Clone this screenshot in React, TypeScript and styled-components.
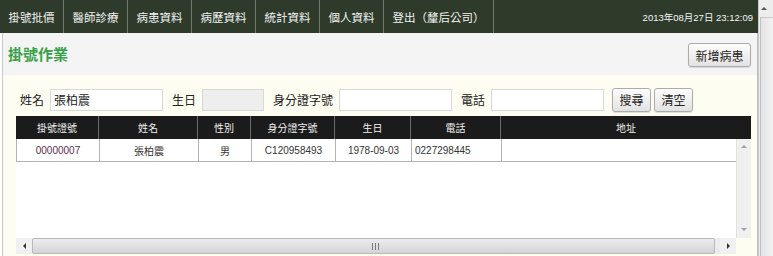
import styled, { createGlobalStyle } from "styled-components";

const GlobalStyle = createGlobalStyle`
  html, body { margin: 0; padding: 0; background: #fff; }
  body { font-family: "Liberation Sans", "Noto Sans CJK TC", sans-serif; overflow: hidden; }
  * { box-sizing: border-box; }
`;

const navItems = ["掛號批價", "醫師診療", "病患資料", "病歷資料", "統計資料", "個人資料", "登出（釐后公司）"];

const columns = [
  { title: "掛號證號", width: 83 },
  { title: "姓名", width: 99 },
  { title: "性別", width: 53 },
  { title: "身分證字號", width: 84 },
  { title: "生日", width: 76 },
  { title: "電話", width: 90 },
  { title: "地址", width: 0 },
];

const rows = [
  { id: "00000007", name: "張柏震", sex: "男", idNo: "C120958493", birth: "1978-09-03", phone: "0227298445", addr: "" },
];

const Page = styled.div`
  display: flex;
  width: 773px;
  height: 256px;
`;

const Main = styled.div`
  width: 758px;
  display: flex;
  flex-direction: column;
`;

const NavBar = styled.div`
  height: 33px;
  background: #2e3b2b;
  display: flex;
  align-items: stretch;
`;

const NavItem = styled.div`
  padding: 0 8.5px;
  display: flex;
  align-items: center;
  color: #f2f2f2;
  font-family: "Noto Sans CJK TC", sans-serif;
  font-size: 11.5px;
  border-right: 1px solid #6f7a6c;
  white-space: nowrap;
`;

const NavDate = styled.div`
  margin-left: auto;
  padding-right: 5px;
  display: flex;
  align-items: center;
  color: #f4f4f4;
  font-size: 9.5px;
  font-family: "Liberation Sans", "Noto Sans CJK TC", sans-serif;
`;

const Content = styled.div`
  flex: 1;
  margin-left: 2px;
  border-left: 1px solid #c9c9c9;
  border-right: 1px solid #bdbdbd;
  display: flex;
  flex-direction: column;
`;

const TitleBar = styled.div`
  height: 42px;
  background: #f4f4f4;
  display: flex;
  align-items: center;
  padding: 0 6px 0 5px;
`;

const Title = styled.h1`
  margin: 0;
  color: #35a046;
  font-size: 15px;
  font-weight: bold;
  font-family: "Noto Sans CJK TC", sans-serif;
  margin-bottom: 2px;
`;

const Button = styled.button<{ w: number }>`
  width: ${({ w }) => w}px;
  height: 24px;
  padding: 0;
  border: 1px solid #ababab;
  border-radius: 3px;
  background: linear-gradient(#fdfdfd, #e2e2e2);
  color: #222;
  font-family: "Noto Sans CJK TC", sans-serif;
  font-size: 12px;
  box-shadow: 0 1px 1px rgba(0, 0, 0, 0.12);
`;

const NewButton = styled(Button)`
  margin-left: auto;
  margin-top: 2px;
`;

const Panel = styled.div`
  flex: 1;
  background: #fdfdf1;
  padding: 13px 5px 0 13px;
  display: flex;
  flex-direction: column;
`;

const FormRow = styled.div`
  display: flex;
  align-items: center;
  height: 23px;
  padding-left: 4px;
  margin-bottom: 5px;
`;

const Label = styled.span`
  font-family: "Noto Sans CJK TC", sans-serif;
  font-size: 12px;
  color: #222;
  margin-right: 6px;
  white-space: nowrap;
`;

const Input = styled.input<{ w: number }>`
  width: ${({ w }) => w}px;
  height: 22px;
  margin: 0 9px 0 0;
  padding: 0 3px;
  border: 1px solid #d8d8d8;
  background: ${({ disabled }) => (disabled ? "#eeeeee" : "#ffffff")};
  font-family: "Noto Sans CJK TC", sans-serif;
  font-size: 12px;
  color: #222;
  outline: none;
`;

const ButtonGap = styled.div`
  display: flex;
  gap: 3px;
  margin-left: -1px;
`;

const Table = styled.div`
  display: flex;
  flex-direction: column;
  width: 735px;
`;

const HeadRow = styled.div`
  display: grid;
  grid-template-columns: 83px 99px 53px 84px 76px 90px 1fr;
  height: 23px;
  background: #1b1b1b;
`;

const HeadCell = styled.div`
  display: flex;
  align-items: center;
  justify-content: center;
  color: #f0f0f0;
  font-family: "Noto Sans CJK TC", sans-serif;
  font-size: 10px;
  border-right: 1px solid #6a6a6a;
  &:last-child { border-right: none; }
`;

const BodyWrap = styled.div`
  display: flex;
  height: 99px;
`;

const Body = styled.div`
  flex: 1;
  background: #fff;
`;

const BodyRow = styled.div`
  display: grid;
  grid-template-columns: 83px 99px 53px 84px 76px 90px 1fr;
  height: 23px;
  border-bottom: 1px solid #b4b4b4;
  border-left: 1px solid #b4b4b4;
`;

const Cell = styled.div<{ left?: boolean; tone?: string }>`
  display: flex;
  align-items: center;
  justify-content: ${({ left }) => (left ? "flex-start" : "center")};
  padding-left: ${({ left }) => (left ? "3px" : "0")};
  color: ${({ tone }) => tone || "#333"};
  font-family: "Liberation Sans", "Noto Sans CJK TC", sans-serif;
  font-size: 10px;
  border-right: 1px solid #b4b4b4;
  &:last-child { border-right: none; }
`;

const VScroll = styled.div`
  width: 15px;
  background: #f0f0f0;
  border-left: 1px solid #e2e2e2;
  display: flex;
  flex-direction: column;
  justify-content: space-between;
  align-items: center;
  padding: 6px 0 7px;
`;

const Arrow = styled.div<{ dir: "up" | "down" | "left" | "right"; c?: string }>`
  width: 0;
  height: 0;
  border: 3px solid transparent;
  ${({ dir, c }) => {
    const col = c || "#8a8a8a";
    if (dir === "up") return `border-bottom-color: ${col}; border-top-width: 0;`;
    if (dir === "down") return `border-top-color: ${col}; border-bottom-width: 0;`;
    if (dir === "left") return `border-right-color: ${col}; border-left-width: 0;`;
    return `border-left-color: ${col}; border-right-width: 0;`;
  }}
`;

const HScrollRow = styled.div`
  display: flex;
  height: 16px;
`;

const HScroll = styled.div`
  width: 720px;
  display: flex;
  align-items: stretch;
  background: #ececec;
`;

const HArrowBox = styled.div`
  width: 16px;
  display: flex;
  align-items: center;
  justify-content: center;
  background: #f0f0f0;
`;

const HThumb = styled.div`
  flex: 1;
  margin-right: 5px;
  border: 1px solid #b9b9b9;
  border-radius: 2px;
  background: linear-gradient(#ececec, #d4d4d4);
  display: flex;
  align-items: center;
  justify-content: center;
  padding-left: 4px;
`;

const PageScroll = styled.div`
  width: 15px;
  background: #ededed;
  border-left: 1px solid #c8c8c8;
  display: flex;
  flex-direction: column;
`;

const PageArrow = styled.div`
  height: 17px;
  display: flex;
  align-items: center;
  justify-content: center;
  padding-right: 4px;
`;

const PageThumb = styled.div`
  flex: 1;
  margin-left: 1px;
  border-left: 1px solid #c0c0c0;
  border-top: 1px solid #c8c8c8;
  background: linear-gradient(90deg, #e4e4e4, #f2f2f2);
`;

function Grip() {
  return (
    <svg width="8" height="7" viewBox="0 0 8 7">
      <rect x="0" y="0" width="1" height="7" fill="#7a7a7a" />
      <rect x="3" y="0" width="1" height="7" fill="#7a7a7a" />
      <rect x="6" y="0" width="1" height="7" fill="#7a7a7a" />
    </svg>
  );
}

export default function App() {
  return (
    <Page>
      <GlobalStyle />
      <Main>
        <NavBar>
          {navItems.map((item) => (
            <NavItem key={item}>{item}</NavItem>
          ))}
          <NavDate>2013年08月27日 23:12:09</NavDate>
        </NavBar>
        <Content>
          <TitleBar>
            <Title>掛號作業</Title>
            <NewButton w={63}>新增病患</NewButton>
          </TitleBar>
          <Panel>
            <FormRow>
              <Label>姓名</Label>
              <Input w={113} defaultValue="張柏震" />
              <Label>生日</Label>
              <Input w={62} disabled />
              <Label>身分證字號</Label>
              <Input w={113} />
              <Label>電話</Label>
              <Input w={113} />
              <ButtonGap>
                <Button w={39}>搜尋</Button>
                <Button w={39}>清空</Button>
              </ButtonGap>
            </FormRow>
            <Table>
              <HeadRow>
                {columns.map((c) => (
                  <HeadCell key={c.title}>{c.title}</HeadCell>
                ))}
              </HeadRow>
              <BodyWrap>
                <Body>
                  {rows.map((r) => (
                    <BodyRow key={r.id}>
                      <Cell tone="#5a2e4e">{r.id}</Cell>
                      <Cell>{r.name}</Cell>
                      <Cell>{r.sex}</Cell>
                      <Cell>{r.idNo}</Cell>
                      <Cell>{r.birth}</Cell>
                      <Cell left>{r.phone}</Cell>
                      <Cell>{r.addr}</Cell>
                    </BodyRow>
                  ))}
                </Body>
                <VScroll>
                  <Arrow dir="up" c="#a0a0a0" />
                  <Arrow dir="down" c="#a0a0a0" />
                </VScroll>
              </BodyWrap>
              <HScrollRow>
                <HScroll>
                  <HArrowBox>
                    <Arrow dir="left" c="#333" />
                  </HArrowBox>
                  <HThumb>
                    <Grip />
                  </HThumb>
                  <HArrowBox>
                    <Arrow dir="right" c="#333" />
                  </HArrowBox>
                </HScroll>
              </HScrollRow>
            </Table>
          </Panel>
        </Content>
      </Main>
      <PageScroll>
        <PageArrow>
          <Arrow dir="up" c="#555" />
        </PageArrow>
        <PageThumb />
      </PageScroll>
    </Page>
  );
}
